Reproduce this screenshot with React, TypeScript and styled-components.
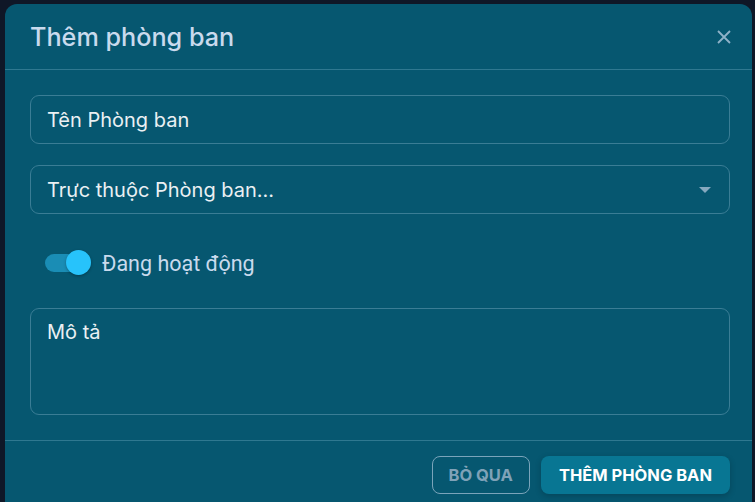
import React, { useState } from "react";
import styled, { createGlobalStyle } from "styled-components";

const GlobalStyle = createGlobalStyle`
  html, body {
    margin: 0;
    padding: 0;
    background: #101828;
    overflow: hidden;
  }
  * {
    box-sizing: border-box;
  }
`;

const Backdrop = styled.div`
  width: 755px;
  height: 502px;
  padding: 4px 3px 0 5px;
  background: #0f1727;
  overflow: hidden;
`;

const Dialog = styled.div`
  height: 520px;
  background: #065770;
  border-radius: 12px 12px 0 0;
  display: flex;
  flex-direction: column;
  font-family: Inter, "Noto Sans", sans-serif;
`;

const Header = styled.div`
  height: 66px;
  display: flex;
  align-items: center;
  justify-content: space-between;
  padding: 0 18px 0 25px;
  border-bottom: 1px solid #2f7890;
`;

const Title = styled.h2`
  margin: 0;
  font-family: Inter, sans-serif;
  font-weight: 500;
  font-size: 25.2px;
  color: #c9daed;
`;

const CloseButton = styled.button`
  background: none;
  border: none;
  padding: 0;
  width: 20px;
  height: 20px;
  display: flex;
  align-items: center;
  justify-content: center;
  color: #8fb2c8;
  cursor: pointer;
`;

const Body = styled.div`
  display: flex;
  flex-direction: column;
  padding: 25px 22px 25px 25px;
  gap: 21px;
`;

const Field = styled.div<{ $tall?: boolean }>`
  height: ${(p) => (p.$tall ? "107px" : "49px")};
  border: 1px solid #3a7d95;
  border-radius: 9px;
  display: flex;
  align-items: ${(p) => (p.$tall ? "flex-start" : "center")};
  justify-content: space-between;
  padding: ${(p) => (p.$tall ? "11px 16px" : "0 16px")};
  font-size: 20px;
  color: #eaf0f3;
`;

const Caret = styled.span`
  width: 0;
  height: 0;
  border-left: 6px solid transparent;
  border-right: 6px solid transparent;
  border-top: 6px solid #86a9bf;
  margin-right: 2px;
`;

const ToggleRow = styled.label`
  display: flex;
  align-items: center;
  gap: 11px;
  height: 52px;
  padding: 4px 0 0 15px;
  font-family: Roboto, sans-serif;
  font-size: 21.5px;
  line-height: 25px;
  color: #c9daed;
  cursor: pointer;
`;

const Track = styled.span<{ $on: boolean }>`
  position: relative;
  width: 42px;
  height: 18px;
  border-radius: 9px;
  margin-right: 4px;
  background: ${(p) => (p.$on ? "#1a8db5" : "#4a6a7a")};
`;

const Thumb = styled.span<{ $on: boolean }>`
  position: absolute;
  top: -4px;
  left: ${(p) => (p.$on ? "21px" : "-3px")};
  width: 25px;
  height: 25px;
  border-radius: 50%;
  background: #27c3fb;
  box-shadow: 0 1px 3px rgba(0, 0, 0, 0.3);
`;

const Footer = styled.div`
  border-top: 1px solid #2f7890;
  display: flex;
  justify-content: flex-end;
  gap: 11px;
  padding: 15px 22px 0 0;
`;

const Button = styled.button<{ $primary?: boolean }>`
  height: 38px;
  padding: 0 ${(p) => (p.$primary ? "17px" : "16px")};
  border-radius: 8px;
  font-family: Inter, sans-serif;
  font-weight: 700;
  font-size: 16.5px;
  text-transform: uppercase;
  cursor: pointer;
  border: 1px solid ${(p) => (p.$primary ? "transparent" : "#7aa4ba")};
  background: ${(p) => (p.$primary ? "#087693" : "transparent")};
  color: ${(p) => (p.$primary ? "#ffffff" : "#7fa2b8")};
  box-shadow: ${(p) => (p.$primary ? "0 2px 6px rgba(0,0,0,0.2)" : "none")};
`;

export default function App() {
  const [active, setActive] = useState(true);
  return (
    <Backdrop>
      <GlobalStyle />
      <Dialog>
        <Header>
          <Title>Thêm phòng ban</Title>
          <CloseButton aria-label="close">
            <svg width="16" height="16" viewBox="0 0 16 16" fill="none">
              <path d="M2 2L14 14M14 2L2 14" stroke="currentColor" strokeWidth="1.8" />
            </svg>
          </CloseButton>
        </Header>
        <Body>
          <Field>Tên Phòng ban</Field>
          <Field>
            Trực thuộc Phòng ban...
            <Caret />
          </Field>
          <ToggleRow onClick={() => setActive(!active)}>
            <Track $on={active}>
              <Thumb $on={active} />
            </Track>
            Đang hoạt động
          </ToggleRow>
          <Field $tall>Mô tả</Field>
        </Body>
        <Footer>
          <Button>Bỏ qua</Button>
          <Button $primary>Thêm phòng ban</Button>
        </Footer>
      </Dialog>
    </Backdrop>
  );
}
